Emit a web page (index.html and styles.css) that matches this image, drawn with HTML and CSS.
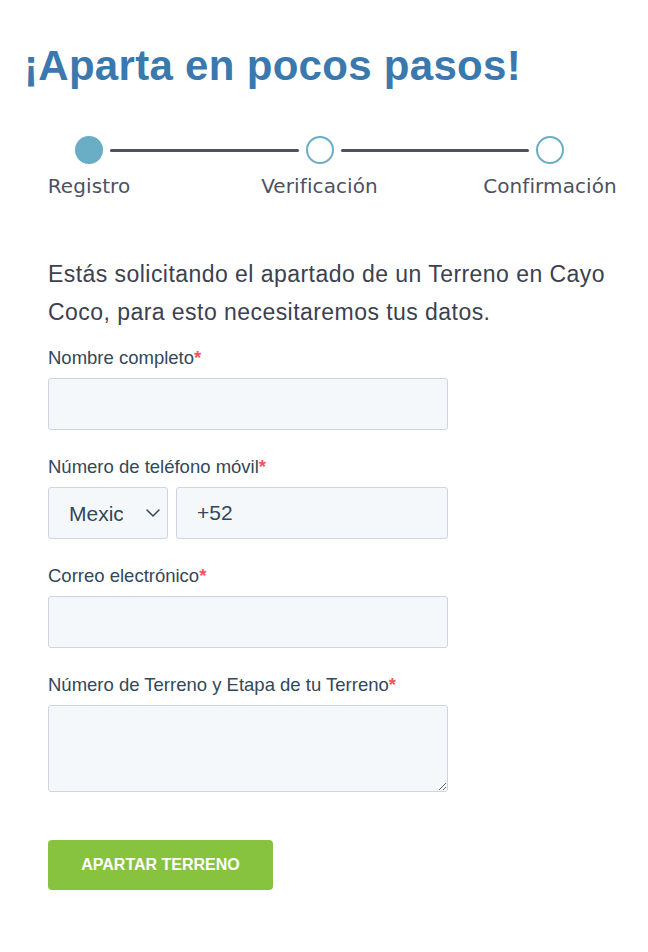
FILE: index.html
```html
<!DOCTYPE html>
<html lang="es">
<head>
    <meta charset="UTF-8">
    <meta name="viewport" content="width=device-width, initial-scale=1.0">
    <title>Aparta tu Terreno - Cayo Coco</title>
    <link rel="stylesheet" href="styles.css">
</head>
<body>
    <div class="page">
        <h1 class="title">¡Aparta en pocos pasos!</h1>

        <div class="stepper">
            <div class="step active">
                <span class="dot"></span>
                <span class="step-name">Registro</span>
            </div>
            <span class="step-line"></span>
            <div class="step">
                <span class="dot"></span>
                <span class="step-name">Verificación</span>
            </div>
            <span class="step-line"></span>
            <div class="step">
                <span class="dot"></span>
                <span class="step-name">Confirmación</span>
            </div>
        </div>

        <p class="intro">Estás solicitando el apartado de un Terreno en Cayo Coco, para esto necesitaremos tus datos.</p>

        <form class="lead-form" onsubmit="return false">
            <div class="field">
                <label for="nombre">Nombre completo<span class="req">*</span></label>
                <input type="text" id="nombre" class="input">
            </div>

            <div class="field">
                <label for="telefono">Número de teléfono móvil<span class="req">*</span></label>
                <div class="phone-row">
                    <div class="select-wrap">
                        <select class="input country">
                            <option>Mexico</option>
                            <option>United States</option>
                            <option>Canada</option>
                        </select>
                        <svg class="chevron" width="14" height="8" viewBox="0 0 14 8">
                            <path d="M1 1l6 6 6-6" fill="none" stroke="#33475b" stroke-width="1.5" stroke-linecap="round" stroke-linejoin="round"/>
                        </svg>
                    </div>
                    <input type="tel" id="telefono" class="input" value="+52">
                </div>
            </div>

            <div class="field">
                <label for="correo">Correo electrónico<span class="req">*</span></label>
                <input type="email" id="correo" class="input">
            </div>

            <div class="field field-last">
                <label for="terreno">Número de Terreno y Etapa de tu Terreno<span class="req">*</span></label>
                <textarea id="terreno" class="input textarea"></textarea>
            </div>

            <button type="submit" class="submit-btn">APARTAR TERRENO</button>
        </form>
    </div>
</body>
</html>
```

FILE: styles.css
```css
body {
    margin: 0;
    background: #fff;
    font-family: 'Liberation Sans', Arial, sans-serif;
    color: #33475b;
}
.page {
    padding: 42px 24px 40px 48px;
}
.title {
    margin: 0 0 0 -24px;
    font-size: 42px;
    line-height: 48px;
    font-weight: bold;
    letter-spacing: 0.3px;
    color: #3b78ad;
}
.stepper {
    display: flex;
    align-items: flex-start;
    margin-top: 46px;
    padding-left: 27px;
}
.step {
    width: 28px;
    display: flex;
    flex-direction: column;
    align-items: center;
}
.dot {
    width: 28px;
    height: 28px;
    box-sizing: border-box;
    border: 2px solid #6aaec5;
    border-radius: 50%;
    background: #fff;
}
.step.active .dot {
    background: #6aaec5;
}
.step-name {
    margin-top: 11px;
    white-space: nowrap;
    font-family: 'DejaVu Sans', Lato, sans-serif;
    font-size: 20px;
    line-height: 22px;
    letter-spacing: 0.1px;
    color: #4d5163;
}
.step-line {
    flex: 0 0 188.5px;
    height: 3px;
    margin: 12.5px 7px 0;
    background: #4d5162;
    border-radius: 2px;
}
.intro {
    margin: 58px 0 0;
    font-size: 23px;
    line-height: 38px;
    letter-spacing: 0.45px;
    color: #3b4150;
}
.lead-form {
    width: 400px;
    margin-top: 17px;
}
.field {
    margin-bottom: 27px;
}
.field-last {
    margin-bottom: 48px;
}
.field label {
    display: block;
    margin-bottom: 10px;
    font-size: 18.5px;
    line-height: 20px;
    color: #33475b;
}
.req {
    color: #f2545b;
    font-weight: bold;
}
.input {
    display: block;
    width: 100%;
    height: 52px;
    box-sizing: border-box;
    padding: 0 20px;
    border: 1px solid #cbd6e2;
    border-radius: 3px;
    background: #f5f8fa;
    font-family: 'Liberation Sans', Arial, sans-serif;
    font-size: 21px;
    color: #33475b;
    outline: none;
}
.phone-row {
    display: flex;
    gap: 8px;
}
.select-wrap {
    position: relative;
    flex: 0 0 120px;
}
.country {
    appearance: none;
    -webkit-appearance: none;
    padding-right: 44px;
    cursor: pointer;
}
.chevron {
    position: absolute;
    right: 8px;
    top: 22px;
    pointer-events: none;
}
.textarea {
    height: 87px;
    padding: 10px 20px;
    resize: vertical;
}
.submit-btn {
    display: block;
    width: 225px;
    height: 50px;
    border: none;
    border-radius: 4px;
    background: #88c33f;
    color: #fff;
    font-family: 'Liberation Sans', Arial, sans-serif;
    font-size: 16px;
    font-weight: bold;
    cursor: pointer;
}
.submit-btn:hover {
    background: #7ab134;
}
```
